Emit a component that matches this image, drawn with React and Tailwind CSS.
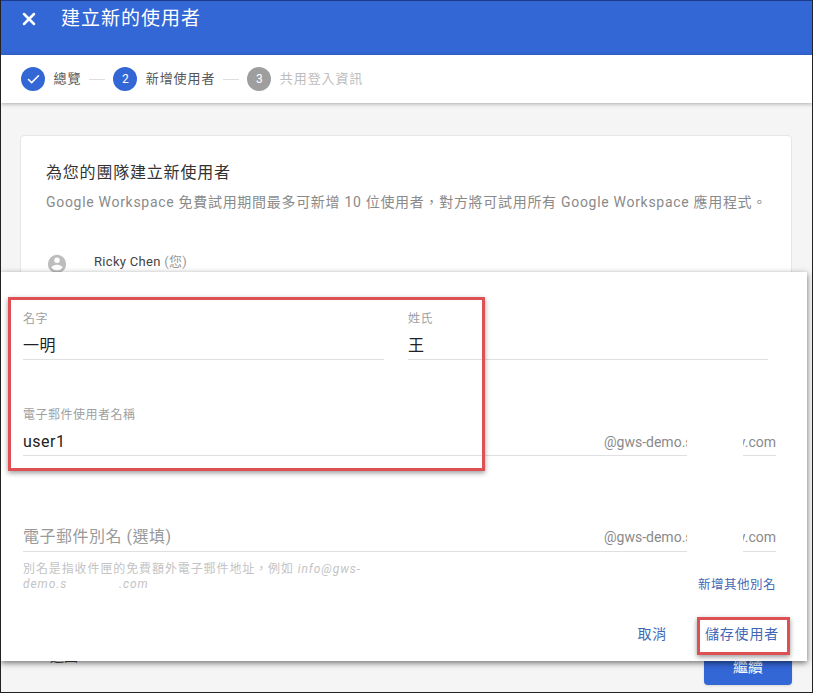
import React from "react";
import { X, Check } from "lucide-react";

const Step = ({ n, label, done, muted }) => (
	<div className="flex items-center">
		<div
			className={`w-6 h-6 rounded-full flex items-center justify-center text-white text-xs ${muted ? "bg-[#9e9e9e]" : "bg-[#3367d6]"}`}
		>
			{done ? <Check size={15} strokeWidth={2.5} /> : n}
		</div>
		<span className={`ml-[8.5px] text-[13px] tracking-[0.9px] ${muted ? "text-[#bdbdbd]" : "text-[#555]"}`}>{label}</span>
	</div>
);

const Domain = () => (
	<div className="flex justify-between w-[172px] text-sm leading-[22px] text-[#8a8a8a]">
		<span>@gws-demo.s</span>
		<span>y.com</span>
	</div>
);

const Field = ({ label, value, className }) => (
	<div className={className}>
		<p className="text-xs leading-[14px] tracking-[0.5px] text-[#a0a0a0]">{label}</p>
		<p className="mt-[9px] text-base leading-[22px] tracking-[0.5px] pb-[2px] text-[#222] border-b border-[#e0e0e0]">{value}</p>
	</div>
);

// white patch hiding part of the domain, runs over the underline too
const Patch = () => <div className="absolute left-[664px] w-[56px] top-0 -bottom-px bg-white"></div>;

const App = () => {
	return (
		<div className="relative w-[813px] h-[693px] overflow-hidden bg-[#f5f5f5] border-x border-b border-[#222] font-['Roboto','Noto_Sans_CJK_TC',sans-serif]">
			<div className="h-[55px] bg-[#3367d6] border-t border-[#1c3a8a] flex items-start pl-[18px] pt-[8px] text-white">
				<X size={20} strokeWidth={3} />
				<h1 className="ml-[22px] text-[19px] leading-[20px] tracking-[1px]">建立新的使用者</h1>
			</div>
			<div className="h-[48px] bg-white shadow-[0_1px_4px_rgba(0,0,0,0.3)] flex items-center pl-[20px]">
				<Step done label="總覽" />
				<div className="w-4 h-px bg-[#ddd] mx-[8px]"></div>
				<Step n="2" label="新增使用者" />
				<div className="w-4 h-px bg-[#ddd] mx-[8px]"></div>
				<Step n="3" label="共用登入資訊" muted />
			</div>

			<div className="mt-[32px] ml-[19px] w-[772px] h-[500px] bg-white border border-[#e6e6e6] rounded pl-[25px] pt-[26px]">
				<h2 className="text-base leading-[22px] tracking-[0.8px] text-[#333]">為您的團隊建立新使用者</h2>
				<p className="mt-[8px] text-sm leading-[20px] text-[#8a8a8a] tracking-[0.7px]">
					Google Workspace 免費試用期間最多可新增 10 位使用者{"\uFF0C"}對方將可試用所有 Google Workspace 應用程式。
				</p>
				<div className="mt-[42px] flex items-start">
					<svg className="w-[22px] h-[22px] -mt-px" viewBox="0 0 24 24" fill="#bdbdbd">
						<path d="M12 2a10 10 0 1 0 0 20 10 10 0 0 0 0-20zm0 3a3 3 0 1 1 0 6 3 3 0 0 1 0-6zm0 14.2a7.2 7.2 0 0 1-6-3.2c0-2 4-3.1 6-3.1s6 1.100 6 3.100a7.200 7.200 0 0 1-6 3.200z" />
					</svg>
					<p className="ml-[26px] text-[13px] leading-[16px] tracking-[0.3px] text-[#444]">
						Ricky Chen <span className="text-[#999]">(您)</span>
					</p>
				</div>
			</div>

			<div className="absolute left-[49px] top-[646px] text-sm text-[#444]">返回</div>
			<button className="absolute left-[703px] top-[649px] w-[88px] h-[36px] rounded-sm bg-[#3367d6] text-white text-[15px] shadow-sm flex items-center justify-center">繼續</button>

			<div className="absolute left-0 top-[272px] w-[806px] h-[389px] bg-white shadow-[0_2px_6px_rgba(0,0,0,0.55)] pl-[22px] pr-[31px] pt-[40px]">
				<div className="flex gap-[24px]">
					<Field label="名字" value="一明" className="w-[361px]" />
					<Field label="姓氏" value="王" className="w-[360px]" />
				</div>
				<div className="mt-[48px] relative">
					<p className="text-xs leading-[14px] tracking-[0.5px] text-[#a0a0a0]">電子郵件使用者名稱</p>
					<div className="mt-[9px] flex justify-between pb-[2px] border-b border-[#e0e0e0]">
						<span className="text-base leading-[22px] tracking-[0.5px] text-[#222]">user1</span>
						<Domain />
					</div>
					<Patch />
				</div>
				<div className="mt-[70px] relative flex justify-between pb-[3px] border-b border-[#e0e0e0]">
					<span className="text-base leading-[22px] tracking-[0.5px] text-[#9a9a9a]">電子郵件別名 (選填)</span>
					<Domain />
					<Patch />
				</div>
				<div className="mt-[10px] flex items-end justify-between">
					<p className="w-[345px] text-xs leading-[15px] tracking-[0.9px] text-[#c4c4c4]">
						別名是指收件匣的免費額外電子郵件地址{"\uFF0C"}例如 <i>info@gws-demo.s</i>
						<span className="inline-block w-[52px]"></span>
						<i>.com</i>
					</p>
					<span className="text-[12.5px] leading-[15px] tracking-[0.5px] text-[#3f67b5]">新增其他別名</span>
				</div>
				<div className="mt-[32px] flex justify-end items-center gap-[38px] text-sm leading-[20px] text-[#3f67b5] tracking-[0.8px]">
					<span>取消</span>
					<span className="mr-[-3px]">儲存使用者</span>
				</div>
			</div>

			<div className="absolute left-[7px] top-[297px] w-[477px] h-[174px] border-[3px] border-[#dd5055] shadow-[0_2px_5px_rgba(0,0,0,0.4)]"></div>
			<div className="absolute left-[696px] top-[617px] w-[93px] h-[38px] border-[3px] border-[#dd5055] shadow-[0_2px_5px_rgba(0,0,0,0.4)]"></div>
		</div>
	);
};

export default App;
